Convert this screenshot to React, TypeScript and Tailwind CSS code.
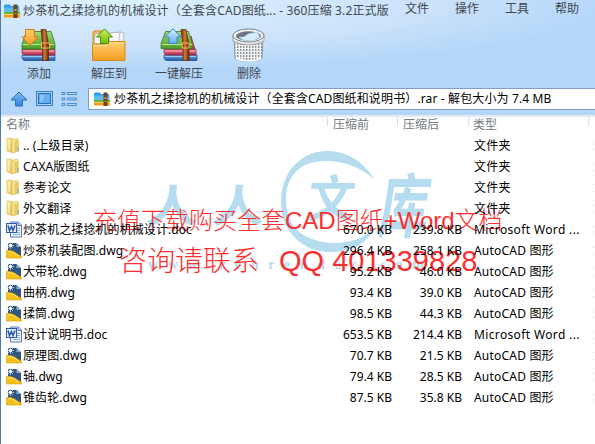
import React from 'react';

type FileKind = 'folder' | 'doc' | 'dwg';

interface FileRow {
  name: string;
  kind: FileKind;
  before?: string;
  after?: string;
  type: string;
}

const files: FileRow[] = [
  { name: '.. (上级目录)', kind: 'folder', type: '文件夹' },
  { name: 'CAXA版图纸', kind: 'folder', type: '文件夹' },
  { name: '参考论文', kind: 'folder', type: '文件夹' },
  { name: '外文翻译', kind: 'folder', type: '文件夹' },
  { name: '炒茶机之揉捻机的机械设计.doc', kind: 'doc', before: '670.0 KB', after: '239.8 KB', type: 'Microsoft Word ...' },
  { name: '炒茶机装配图.dwg', kind: 'dwg', before: '296.4 KB', after: '258.1 KB', type: 'AutoCAD 图形' },
  { name: '大带轮.dwg', kind: 'dwg', before: '95.2 KB', after: '46.0 KB', type: 'AutoCAD 图形' },
  { name: '曲柄.dwg', kind: 'dwg', before: '93.4 KB', after: '39.0 KB', type: 'AutoCAD 图形' },
  { name: '揉筒.dwg', kind: 'dwg', before: '98.5 KB', after: '44.3 KB', type: 'AutoCAD 图形' },
  { name: '设计说明书.doc', kind: 'doc', before: '653.5 KB', after: '214.4 KB', type: 'Microsoft Word ...' },
  { name: '原理图.dwg', kind: 'dwg', before: '70.7 KB', after: '21.5 KB', type: 'AutoCAD 图形' },
  { name: '轴.dwg', kind: 'dwg', before: '79.4 KB', after: '28.5 KB', type: 'AutoCAD 图形' },
  { name: '锥齿轮.dwg', kind: 'dwg', before: '87.5 KB', after: '35.8 KB', type: 'AutoCAD 图形' },
];

const Gradients = () => (
  <svg width="0" height="0" className="absolute">
    <defs>
      <linearGradient id="green" x1="0" y1="0" x2="0" y2="1">
        <stop offset="0" stopColor="#a3d978" />
        <stop offset="1" stopColor="#4c9f28" />
      </linearGradient>
      <linearGradient id="lime" x1="0" y1="0" x2="0" y2="1">
        <stop offset="0" stopColor="#d2f25a" />
        <stop offset="1" stopColor="#6cbf0c" />
      </linearGradient>
      <linearGradient id="red" x1="0" y1="0" x2="0" y2="1">
        <stop offset="0" stopColor="#ee8090" />
        <stop offset="1" stopColor="#b5284a" />
      </linearGradient>
      <linearGradient id="blue" x1="0" y1="0" x2="0" y2="1">
        <stop offset="0" stopColor="#75b4ee" />
        <stop offset="1" stopColor="#1c55a4" />
      </linearGradient>
      <linearGradient id="sky" x1="0" y1="0" x2="0" y2="1">
        <stop offset="0" stopColor="#d9f1ff" />
        <stop offset="1" stopColor="#5eaef2" />
      </linearGradient>
      <linearGradient id="orange" x1="0" y1="0" x2="0" y2="1">
        <stop offset="0" stopColor="#ffd070" />
        <stop offset="1" stopColor="#f59d22" />
      </linearGradient>
      <linearGradient id="belt" x1="0" y1="0" x2="1" y2="0">
        <stop offset="0" stopColor="#6b2c08" />
        <stop offset=".5" stopColor="#cf7b35" />
        <stop offset="1" stopColor="#5d2505" />
      </linearGradient>
      <linearGradient id="folder" x1="0" y1="0" x2="1" y2="1">
        <stop offset="0" stopColor="#fdf0a8" />
        <stop offset="1" stopColor="#e0b93c" />
      </linearGradient>
      <linearGradient id="nav" x1="0" y1="0" x2="0" y2="1">
        <stop offset="0" stopColor="#7fbcf4" />
        <stop offset="1" stopColor="#2f82dc" />
      </linearGradient>
    </defs>
  </svg>
);

const AddIcon = () => (
  <svg width="36" height="36" viewBox="0 0 36 36">
    <path d="M1 27h33v5.500H3q-2-1-2-3z" fill="url(#blue)" stroke="#1d4c8c" strokeWidth=".7" />
    <path d="M1.500 28.500h32" stroke="#a9d5f8" strokeWidth=".8" />
    <path d="M1 21.500h33v5.500H3q-2-1-2-3z" fill="url(#red)" stroke="#8c1d35" strokeWidth=".7" />
    <path d="M2 23h31" stroke="#ffc0c8" strokeWidth=".8" />
    <path d="M5.500 3.500h24.500l4 12.500v5H1v-5z" fill="url(#green)" stroke="#337817" strokeWidth=".8" />
    <path d="M1.500 16.500h32" stroke="#b6e887" />
    <path d="M20 1.500h5l2.500 15v16h-6v-16z" fill="url(#belt)" stroke="#602809" strokeWidth=".7" />
    <rect x="20.500" y="15" width="8" height="5" fill="none" stroke="#f3b35a" />
    <path d="M4.500 1.500h9V9h3.800L9 17 .8 9h3.700z" fill="url(#orange)" stroke="#d67b15" />
  </svg>
);

const ExtractToIcon = () => (
  <svg width="36" height="36" viewBox="0 0 36 36">
    <path d="M3 3h8l2 3h18v10H2V5z" fill="#f5b945" stroke="#cf8d20" />
    <path d="M4 6l9-2 2 12H3zM18 5l12-1 2 13H18z" fill="#fbfbfb" stroke="#9aa5b0" strokeWidth=".8" />
    <path d="M29 4l4 1-1 13h-5z" fill="#eef3f8" stroke="#9aa5b0" strokeWidth=".6" />
    <path d="M1.500 16h13l3-2.500h16.500V32.500H1.500z" fill="url(#orange)" stroke="#d98717" />
    <path d="M2.500 17.500h12.500l3-2.500h15" stroke="#ffe6a2" fill="none" />
    <path d="M13.500.8L21.500 9h-4v6.500h-8V9h-4z" fill="url(#lime)" stroke="#468f0d" />
  </svg>
);

const OneKeyIcon = () => (
  <svg width="38" height="36" viewBox="0 0 38 36">
    <path d="M31 8l4 13h-5z" fill="#c93a4c" stroke="#8c1d35" strokeWidth=".6" />
    <g transform="translate(3 0)">
      <path d="M1 27h33v5.500H3q-2-1-2-3z" fill="url(#blue)" stroke="#1d4c8c" strokeWidth=".7" />
      <path d="M2 28.500h31" stroke="#a9d5f8" strokeWidth=".8" />
      <path d="M1 21.500h32v5.500H3q-2-1-2-3z" fill="url(#red)" stroke="#8c1d35" strokeWidth=".7" />
      <path d="M2 23h31" stroke="#ffc0c8" strokeWidth=".8" />
    </g>
    <path d="M5.500 3.500h23l4 12.500v4.500H1V16z" fill="url(#green)" stroke="#337817" strokeWidth=".8" />
    <path d="M1.500 16.500h31" stroke="#b6e887" />
    <path d="M21 1.500h5l3 15v16h-6v-16z" fill="url(#belt)" stroke="#602809" strokeWidth=".7" />
    <rect x="22" y="15" width="7" height="5" fill="none" stroke="#f3b35a" />
    <path d="M13 .8L21 9h-4v6.500H9V9H5z" fill="url(#sky)" stroke="#3a83cc" />
  </svg>
);

const DeleteIcon = () => (
  <svg width="36" height="36" viewBox="0 0 36 36">
    <defs>
      <pattern id="mesh" width="3" height="3" patternUnits="userSpaceOnUse">
        <rect width="3" height="3" fill="#f1f2f3" />
        <rect width="1.400" height="2" fill="#8c9196" />
      </pattern>
    </defs>
    <path d="M3 10l1 20q13 7 27 0l1-20z" fill="url(#mesh)" stroke="#7f868d" strokeWidth=".8" />
    <path d="M2 7v6q15 8 31 0V7z" fill="#e9ebed" stroke="#8a9096" strokeWidth=".8" />
    <ellipse cx="17.500" cy="7.500" rx="15.500" ry="6.500" fill="#f5f6f7" stroke="#7b8289" />
    <ellipse cx="17.500" cy="8" rx="12.500" ry="4.700" fill="#6c7681" />
    <path d="M8 9l5 0 4-3 9-2 3 5-7 4-10-1z" fill="#d7edfb" stroke="#a8cfe9" strokeWidth=".6" />
    <path d="M5 30q12 6 25 0" fill="none" stroke="#fff" strokeWidth="1.500" />
  </svg>
);

const ArchiveIcon = () => (
  <svg width="16" height="15" viewBox="0 0 16 15" className="shrink-0">
    <path d="M1 .5h5l1 1.500h8v6H0V1.500z" fill="#2f9de8" />
    <path d="M0 3.500h15.500V8H0z" fill="#5cbcf5" />
    <path d="M0 8h16v3H0z" fill="#6eb52d" />
    <path d="M0 11h16v2.500H0z" fill="#f29a1f" />
    <path d="M0 10.500h16" stroke="#efd65c" />
    <path d="M9.500 0.500h4v13.500h-4z" fill="#70401f" />
    <path d="M10.500 5h2v2h-2zM10.500 9h2v1h-2z" fill="#dca04d" />
  </svg>
);

const FileIcon = ({ kind }: { kind: FileKind }) => {
  if (kind === 'folder') {
    return (
      <svg width="16" height="17" viewBox="0 0 16 17">
        <path d="M1 1h4l2 1v13l-1 .5-5-1.500z" fill="url(#folder)" stroke="#dfc05c" strokeWidth=".6" />
        <path d="M6 3l5-2 1 1v12l-6 2z" fill="#f7e79a" stroke="#d5b348" strokeWidth=".6" />
        <path d="M8.500 4l4-1v11l-4 2z" fill="#e8c95e" />
        <path d="M11.500 10h1.500v4l-1.500 1z" fill="#94b4b0" />
        <path d="M3 3v10" stroke="#fff7c8" />
      </svg>
    );
  }
  if (kind === 'doc') {
    return (
      <svg width="16" height="17" viewBox="0 0 16 17">
        <path d="M4.500 1h8l3 3v12h-11z" fill="#eef4fd" stroke="#547bb8" />
        <path d="M12 1v3.500h3.500" fill="#c6d8f2" stroke="#547bb8" />
        <path d="M11 7.500h3M11 9.500h3M11 11.500h3M7 13.500h7" stroke="#8fabd8" />
        <rect x=".5" y="2.500" width="10" height="9" fill="#dfe9f7" stroke="#2b5ca8" />
        <path d="M2 4.500l1.500 5 2-4 1.500 4 2-5" fill="none" stroke="#2450a0" strokeWidth="1.400" />
      </svg>
    );
  }
  return (
    <svg width="16" height="17" viewBox="0 0 16 17">
      <path d="M2 1h8.500L15 5v9H2z" fill="#32567f" />
      <path d="M10.500 1L15 5h-4.500z" fill="#8badd0" />
      <path d="M.5 8.500q4-1 8 1.500l7 4.500v1.500H.5z" fill="#f2c21b" stroke="#d79d0c" strokeWidth=".6" />
      <path d="M1.500 10q4-1 7 1l4 3" fill="none" stroke="#ffe36e" />
      <path d="M4.500 0v7M1 3.500h7M2 1l5 5M7 1L2 6" stroke="#b9cfe6" strokeWidth=".8" />
      <circle cx="4.500" cy="3.500" r="1.500" fill="#fff" />
    </svg>
  );
};

const Watermark = () => (
  <svg className="pointer-events-none absolute left-0 top-0" width="594" height="444" viewBox="1 0 594 444" fill="#b5dcef">
    <path d="M375 180C362 160 347 151 326 151C298 152 281 175 281 202C281 232 303 252 330 252C350 252 366 245 377 226C366 238 350 243 334 243C305 242 286 228 286 200C286 175 301 161 325 161C345 161 362 168 375 180Z" />
    <g fontFamily="'Noto Sans CJK SC', sans-serif" fontWeight="600">
      <text fontSize="44" transform="translate(145 222) skewX(-4) scale(1.200 1)">人</text>
      <text fontSize="44" transform="translate(211 222) skewX(-4) scale(1.200 1)">人</text>
      <text fontSize="50" transform="translate(306 217) skewX(-6) scale(.95 1)">文</text>
      <text fontSize="70" transform="translate(376 232) skewX(-8) scale(.72 1)">库</text>
    </g>
    <text x="148" y="269" fontFamily="'Liberation Serif', serif" fontWeight="700" fontSize="14" textLength="276">
      www.renrendoc.com
    </text>
  </svg>
);

const tools = [
  { label: '添加', icon: <AddIcon /> },
  { label: '解压到', icon: <ExtractToIcon /> },
  { label: '一键解压', icon: <OneKeyIcon /> },
  { label: '删除', icon: <DeleteIcon /> },
];

const menus = ['文件', '操作', '工具', '帮助'];

const TitleBar = () => (
  <div className="flex h-[24px] items-start text-[#3f4650]">
    <div className="flex h-[22px] w-[401px] shrink-0 items-center gap-[3px] pl-[3px]">
      <ArchiveIcon />
      <span className="tracking-[0.14px]">炒茶机之揉捻机的机械设计（全套含CAD图纸... - 360压缩 3.2正式版</span>
    </div>
    {menus.map(menu => (
      <span key={menu} className="w-[50px] shrink-0 pl-[3px] leading-[18px]">{menu}</span>
    ))}
  </div>
);

const Toolbar = () => (
  <div className="flex h-[64px] pl-[3px] pt-[4px] text-[#3f4650]">
    {tools.map(tool => (
      <div key={tool.label} className="flex w-[70px] shrink-0 flex-col items-center">
        <div className="h-[37px]">{tool.icon}</div>
        <span className="leading-[18px]">{tool.label}</span>
      </div>
    ))}
  </div>
);

const AddressBar = () => (
  <div className="flex h-[27px]">
    <div className="flex w-[87px] shrink-0 gap-[8px] pl-[9px] pt-[3px]">
      <svg width="18" height="16" viewBox="0 0 18 16">
        <path d="M9 1l8 8h-4.500v6h-7V9H1z" fill="url(#nav)" stroke="#2a72bd" />
      </svg>
      <svg width="17" height="16" viewBox="0 0 17 16">
        <rect x=".5" y=".5" width="16" height="14" fill="#a9d3fa" stroke="#377fca" />
        <rect x="2.500" y="2.500" width="12" height="10" fill="#6aaef0" stroke="#246fbd" />
        <path d="M4 4h5l-3 7H4z" fill="#8dc3f6" />
      </svg>
      <svg width="17" height="16" viewBox="0 0 17 16" fill="#b9dcfb" stroke="#4489d1">
        <path d="M1 1.500h3v2H1zM1 7h3v2H1zM1 12.500h3v2H1zM6.500 1.500h9v2h-9zM6.500 7h9v2h-9zM6.500 12.500h9v2h-9z" />
      </svg>
    </div>
    <div className="flex h-[22px] flex-1 items-center gap-[4px] border border-r-0 border-[#7f9fc9] bg-white pl-[5px] text-black">
      <ArchiveIcon />
      <span className="whitespace-nowrap tracking-[0.13px]">炒茶机之揉捻机的机械设计（全套含CAD图纸和说明书）.rar - 解包大小为 7.4 MB</span>
    </div>
  </div>
);

const ListHeader = () => (
  <div className="flex h-[20px] items-start border-t-2 border-[#e3eaf2] leading-[16px] text-[#767b82]">
    <span className="h-[9px] w-[327px] shrink-0 border-r border-[#d5e2f0] pl-[5px]">名称</span>
    <span className="h-[9px] w-[70px] shrink-0 border-r border-[#d5e2f0] pl-[5px]">压缩前</span>
    <span className="h-[9px] w-[71px] shrink-0 border-r border-[#d5e2f0] pl-[5px]">压缩后</span>
    <span className="h-[9px] w-[120px] shrink-0 border-r border-[#d5e2f0] pl-[4px]">类型</span>
  </div>
);

export default function App() {
  return (
    <div className="relative h-[444px] w-[595px] overflow-hidden whitespace-nowrap border-l border-[#4f7cae] bg-white font-['Noto_Sans','Noto_Sans_CJK_SC',sans-serif] text-[12px]">
      <Gradients />
      <div className="h-[115px] bg-[#b4d7f9] bg-[radial-gradient(ellipse_500px_70px_at_110px_0px,#dcf1fd_0%,#cbe2fa_65%,#b4d7f9_100%)]">
        <TitleBar />
        <Toolbar />
        <AddressBar />
      </div>
      <Watermark />
      {/* Red notice sits under the file list text */}
      <div className="pointer-events-none absolute left-0 top-0 font-['Liberation_Sans','Noto_Sans_CJK_SC',sans-serif] font-light text-[#fb2f2f]">
        <p className="absolute left-[92px] top-[205px] text-[24px] leading-[32px]">充值下载购买全套CAD图纸+Word文档</p>
        <p className="absolute left-[118px] top-[243px] whitespace-pre text-[28px] leading-[36px]">
          咨询请联系<span className="pl-[20px] text-[29px]">QQ 401339828</span>
        </p>
      </div>
      <ListHeader />
      <div className="relative text-black">
        {files.map(file => (
          <div key={file.name} className="flex h-[21px] items-center">
            <div className="flex w-[327px] shrink-0 items-center gap-[1px] pl-[5px]">
              <FileIcon kind={file.kind} />
              <span className="tracking-[0.08px]">{file.name}</span>
            </div>
            <span className="w-[64px] shrink-0 text-right">{file.before}</span>
            <span className="w-[70px] shrink-0 text-right">{file.after}</span>
            <span className={`w-[131px] shrink-0 pl-[12px] ${file.kind === 'doc' ? 'tracking-[0.36px]' : 'tracking-[0.2px]'}`}>{file.type}</span>
            <i className="h-[8px] w-px border-y border-[#f3c9a0]" />
          </div>
        ))}
      </div>
    </div>
  );
}
